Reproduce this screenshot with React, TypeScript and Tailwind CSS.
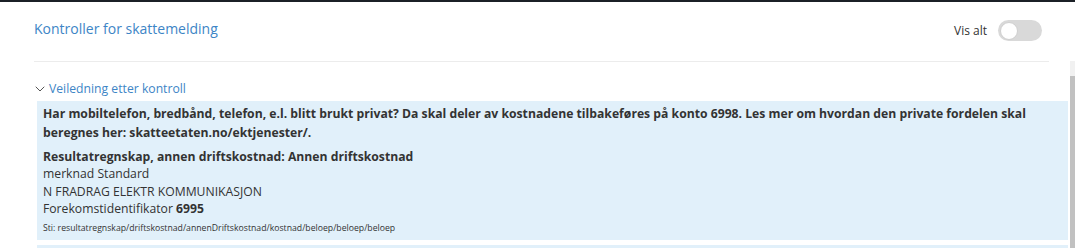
import React, { useState } from 'react';
import { ChevronDown } from 'lucide-react';

const App: React.FC = () => {
    const [visAlt, setVisAlt] = useState(false);

    return (
        <div className="w-[1075px] h-[248px] overflow-hidden bg-white border-t-2 border-[#1b2026] font-['Open_Sans',sans-serif] text-[#333]">
            {/* Header */}
            <div className="flex items-start justify-between pl-[34px] pr-[33px] h-[59px]">
                <h1 className="pt-[17px] text-[14px] leading-[20px] text-[#3d85c6] font-normal">Kontroller for skattemelding</h1>
                <div className="flex items-center gap-[11px] pt-[18px]">
                    <span className="text-[12px] text-[#333]">Vis alt</span>
                    <button
                        onClick={() => setVisAlt(!visAlt)}
                        className={`w-[44px] h-[21px] rounded-full flex items-center px-[2px] ${visAlt ? 'bg-[#3d85c6] justify-end' : 'bg-[#d9d9d9] justify-start'}`}
                    >
                        <span className="w-[18px] h-[18px] rounded-full bg-white border border-[#cfcfcf]" />
                    </button>
                </div>
            </div>

            <div className="flex">
                <div className="flex-1 pl-[34px]">
                    <div className="h-px bg-[#ececec] mr-[21px]" />

                    {/* Veiledning */}
                    <div className="flex items-center gap-[1px] -ml-[2px] pt-[18px] pb-[2px] text-[12.2px] leading-[18.75px] text-[#3d85c6]">
                        <ChevronDown size={16} strokeWidth={1.5} className="text-[#555]" />
                        <span>Veiledning etter kontroll</span>
                    </div>

                    <div className="ml-[3px] mr-[2px]">
                        <div className="bg-[#e1f0fa] px-[6px] pt-[3px] pb-[6px]">
                            <p className="text-[12.2px] font-bold leading-[19px] text-[#333]">
                                Har mobiltelefon, bredbånd, telefon, e.l. blitt brukt privat? Da skal deler av kostnadene tilbakeføres på konto 6998. Les mer om hvordan den private fordelen skal beregnes her: skatteetaten.no/ektjenester/.
                            </p>
                            <div className="mt-[6px] text-[12.2px] leading-[17.5px]">
                                <p className="font-bold">Resultatregnskap, annen driftskostnad: Annen driftskostnad</p>
                                <p>merknad Standard</p>
                                <p>N FRADRAG ELEKTR KOMMUNIKASJON</p>
                                <p>Forekomstidentifikator <span className="font-bold">6995</span></p>
                                <p className="text-[8.7px] leading-[12px] mt-[4px]">Sti: resultatregnskap/driftskostnad/annenDriftskostnad/kostnad/beloep/beloep/beloep</p>
                            </div>
                        </div>
                        <div className="bg-[#e1f0fa] h-[20px] mt-[5px]" />
                    </div>
                </div>

                {/* Scrollbar */}
                <div className="w-[5px] bg-[#f1f1f1] flex flex-col">
                    <div className="h-[15px]" />
                    <div className="flex-1 bg-[#c1c1c1]" />
                </div>
            </div>
        </div>
    );
};

export default App;
